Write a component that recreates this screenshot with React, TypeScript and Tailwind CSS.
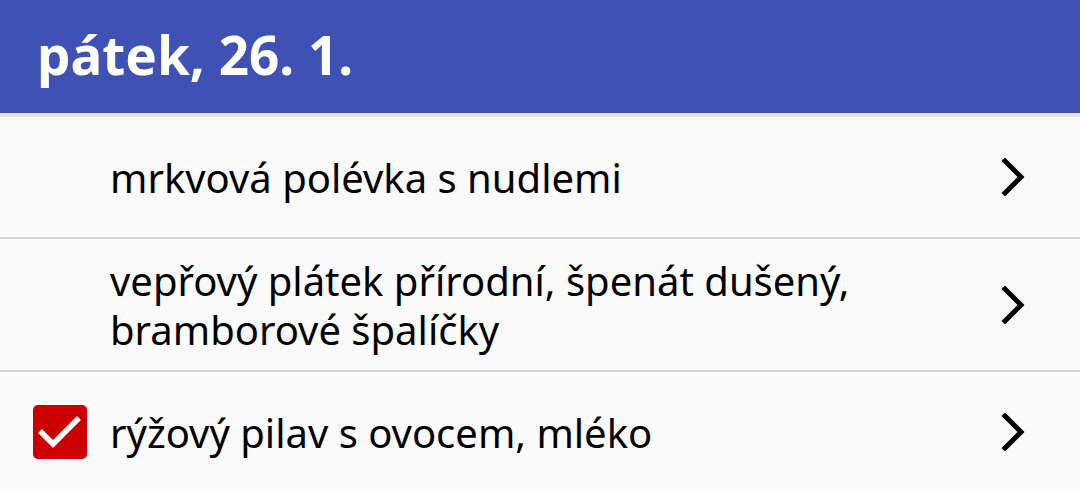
const items = [
  { text: ['mrkvová polévka s nudlemi'], checked: false, h: 'h-[120px]' },
  { text: ['vepřový plátek přírodní, špenát dušený,', 'bramborové špalíčky'], checked: false, h: 'h-[131px]' },
  { text: ['rýžový pilav s ovocem, mléko'], checked: true, h: 'h-[120px]' },
]

function Chevron() {
  return (
    <svg width="26" height="38" viewBox="0 0 26 38" fill="none">
      <path d="M4 3 L20 19 L4 35" stroke="#000" strokeWidth="5" strokeLinecap="square" />
    </svg>
  )
}

function Check() {
  return (
    <div className="w-[54px] h-[54px] rounded-[5px] bg-[#cc0000]">
      <svg width="54" height="54" viewBox="0 0 54 54" fill="none">
        <path d="M7 26 L20 39 L46 13" stroke="#fff" strokeWidth="5.5" />
      </svg>
    </div>
  )
}

export default function App() {
  return (
    <div className="w-[1080px] h-[489px] overflow-hidden bg-[#fafafa]" style={{ fontFamily: '"Noto Sans", sans-serif' }}>
      <div className="h-[113px] bg-[#3f51b5] flex items-center pl-[37px] pb-[4px]">
        <h1 className="text-white text-[53px] font-bold leading-none">pátek, 26. 1.</h1>
      </div>
      <div className="h-[4px] bg-[#e4e4e4]" />
      {items.map((it, i) => (
        <div key={i}>
          {i > 0 && <div className="h-[2px] bg-[#d6d6d6]" />}
          <div className={`${it.h} flex items-center`}>
            <div className="w-[110px] pl-[33px] shrink-0">{it.checked && <Check />}</div>
            <div className="flex-1 text-[40px] leading-[49px] text-black">
              {it.text.map((t, j) => (
                <div key={j}>{t}</div>
              ))}
            </div>
            <div className="w-[80px] shrink-0 pl-[1px]">
              <Chevron />
            </div>
          </div>
        </div>
      ))}
    </div>
  )
}
